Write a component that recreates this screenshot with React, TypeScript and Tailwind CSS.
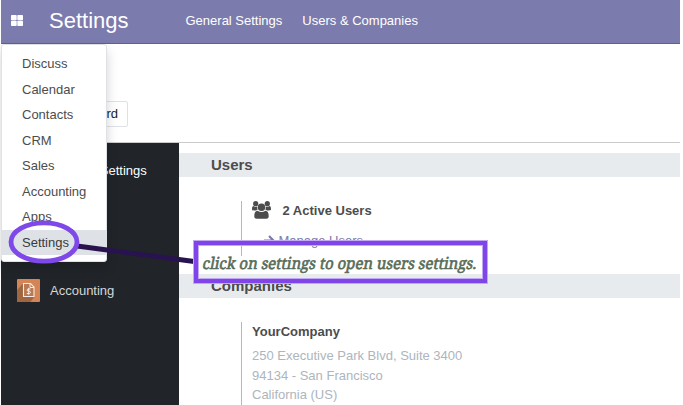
import React from "react";

const APPS = ["Discuss", "Calendar", "Contacts", "CRM", "Sales", "Accounting", "Apps", "Settings"];

function UsersIcon() {
  return (
    <svg className="h-[18px] w-[19px] shrink-0" viewBox="0 0 19 18" fill="#4c4c4c">
      <circle cx="3.700" cy="2.700" r="2.600" />
      <circle cx="15.300" cy="2.700" r="2.600" />
      <path d="M0 8.200C0 6 .6 5 1.500 5c1.200.9 2.500 1 3.500.7 0 1.200.2 2 .7 2.700-.7.200-1.200.5-1.700 1H2C.7 9.400 0 9 0 8.200ZM19 8.200C19 6 18.400 5 17.500 5c-1.200.9-2.500 1-3.500.7 0 1.200-.2 2-.7 2.700.7.200 1.200.5 1.700 1h2c1.300 0 2-.4 2-1.200Z" />
      <circle cx="9.500" cy="6.200" r="3.800" />
      <path d="M2.300 15.300c0-3.500.9-5.300 3.200-5.500 2.400 1.700 5.600 1.700 8 0 2.300.2 3.200 2 3.200 5.500 0 1.700-.9 2.500-2.500 2.500H4.800c-1.600 0-2.500-.8-2.500-2.500Z" />
    </svg>
  );
}

function AccountingIcon() {
  return (
    <svg className="h-[23px] w-[23px]" viewBox="0 0 23 23">
      <rect width="23" height="23" rx="1" fill="#d58455" />
      <path d="M0 11 6.500 4 17.500 17.500l-4 5.500H1a1 1 0 0 1-1-1Z" fill="#a0663f" />
      <path d="M6.500 4.500h7l3.500 3.500v9.500H6.500Z" fill="#b87a53" stroke="#f6ebe4" strokeWidth="1.100" />
      <path d="M13 4.500v4h4" fill="none" stroke="#f6ebe4" />
      <path d="M13.500 10h-2.200c-1.600 0-1.600 2.200 0 2.200h.9c1.700 0 1.700 2.300 0 2.300H9.800M11.700 8.800v7" fill="none" stroke="#f6ebe4" />
    </svg>
  );
}

function AppMenu() {
  return (
    <nav className="absolute left-[1px] top-[44px] z-10 h-[218px] w-[106px] rounded-[3px] border border-[#dee2e6] bg-white pt-[6px] shadow-[0_6px_12px_rgba(0,0,0,0.175)]">
      {APPS.map((name) => (
        <div
          key={name}
          className={
            name === "Settings"
              ? "h-[25.5px] bg-[#dee2e6] pl-5 leading-[25.5px] text-[#373b40]"
              : "h-[25.5px] pl-5 leading-[25.5px] text-[#4c4c4c]"
          }
        >
          {name}
        </div>
      ))}
    </nav>
  );
}

function Annotation() {
  return (
    <>
      <svg className="absolute left-0 top-0 z-20 h-[405px] w-[683px]" viewBox="0 0 683 405">
        <path d="m77 246 121 16" stroke="#29134f" strokeWidth="5" />
        <ellipse cx="44" cy="242" rx="33" ry="19.200" fill="none" stroke="#7f48e8" strokeWidth="4.800" />
      </svg>
      <div className="absolute left-[194px] top-[241px] z-20 h-[42px] w-[293px] border-4 border-[#7f45e8] pl-[5px] pt-[6px] shadow-[0_0_0_1px_#c3a9f5,inset_0_0_0_1px_#c3a9f5]">
        <div className="w-max origin-left scale-x-[0.933] -skew-x-12 whitespace-nowrap font-['Noto_Serif','DejaVu_Serif',serif] text-[16px] leading-[24px] text-[#566b57] [-webkit-text-stroke:0.6px_#566b57]">
          click on settings to open users settings.
        </div>
      </div>
    </>
  );
}

function SectionTitle({ children }: { children: React.ReactNode }) {
  return <h2 className="h-6 bg-[#e7ebee] pl-8 text-[15px] font-bold leading-6 text-[#4c4c4c]">{children}</h2>;
}

export default function App() {
  return (
    <div className="relative flex h-[405px] w-[683px] flex-col overflow-hidden bg-white pl-[1px] pr-[3px] font-['Liberation_Sans',Arial,sans-serif] text-[13px] text-[#4c4c4c]">
      <header className="flex h-[44px] shrink-0 items-center border-b border-[#5f5e97] bg-[#7c7bad] pb-[1px] text-white">
        <svg className="ml-[10px] mt-[-2px] h-[11px] w-[12px]" viewBox="0 0 12 11" fill="white">
          <rect width="5.700" height="5.200" rx=".8" />
          <rect x="6.300" width="5.700" height="5.200" rx=".8" />
          <rect y="5.800" width="5.700" height="5.200" rx=".8" />
          <rect x="6.300" y="5.800" width="5.700" height="5.200" rx=".8" />
        </svg>
        <h1 className="ml-[26px] w-[136.5px] text-[22px] leading-[30px]">Settings</h1>
        <span className="mt-[-1px]">General Settings</span>
        <span className="ml-5 mt-[-1px]">Users &amp; Companies</span>
      </header>
      <div className="flex h-[99px] shrink-0 items-start border-b border-[#c9cacb] pl-[14px] pt-[57px]">
        <button className="h-[26px] w-[113px] rounded-[2px] border border-[#dee2e6] pr-[9px] text-right leading-[24px] text-[#212529]">
          Discard
        </button>
      </div>
      <div className="flex grow">
        <aside className="w-[178px] shrink-0 bg-[#212529]">
          <div className="flex h-[56px] items-center pl-[49px] text-white">General Settings</div>
          <div className="mt-[80px] flex items-center gap-[10px] pl-4 text-[#d4d6d8]">
            <AccountingIcon />
            <span>Accounting</span>
          </div>
        </aside>
        <main className="grow pt-[10px]">
          <SectionTitle>Users</SectionTitle>
          <div className="ml-[62px] mt-6 h-[55px] border-l border-[#b5b7b9] pl-[10px]">
            <div className="flex items-start">
              <UsersIcon />
              <span className="ml-[11.5px] font-bold leading-[19px]">2 Active Users</span>
            </div>
            <div className="ml-[12px] mt-[11px] flex h-5 items-center gap-[3.500px] text-[#7c7bad]">
              <svg className="mt-[-1px] h-[11px] w-[11px]" viewBox="0 0 11 11" fill="none" stroke="currentColor" strokeWidth="2.200">
                <path d="M0 5.500h9M5 1l4.500 4.500L5 10" />
              </svg>
              <span>Manage Users</span>
            </div>
          </div>
          <div className="mt-[18px]">
            <SectionTitle>Companies</SectionTitle>
          </div>
          <div className="ml-[62px] mt-6 h-[90px] border-l border-[#b5b7b9] pl-[10px] leading-[19.500px] text-[#adb5bd]">
            <div className="mb-[4.400px] font-bold text-[#4c4c4c]">YourCompany</div>
            <div>250 Executive Park Blvd, Suite 3400</div>
            <div className="pt-[0.600px] leading-[19px]">94134 - San Francisco</div>
            <div>California (US)</div>
          </div>
        </main>
      </div>
      <AppMenu />
      <Annotation />
    </div>
  );
}
